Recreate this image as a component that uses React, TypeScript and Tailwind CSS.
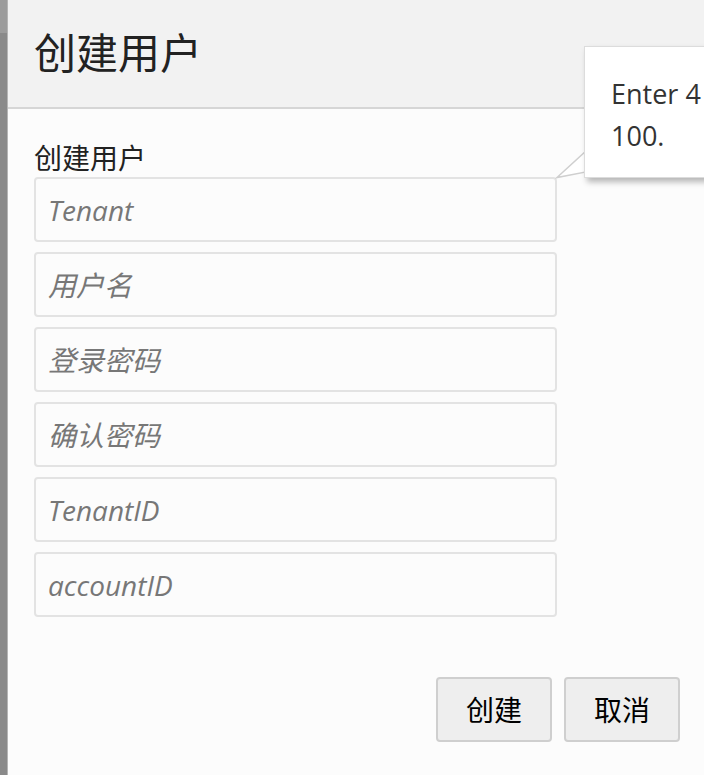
import React from 'react';

const fields = ['Tenant', '用户名', '登录密码', '确认密码', 'TenantID', 'accountID'];

const font = { fontFamily: '"Open Sans", "Noto Sans CJK SC", sans-serif' };

const App: React.FC = () => {
  return (
    <div className="relative flex h-[775px] w-[704px] overflow-hidden bg-[#8a8a8a]" style={font}>
      {/* strip of the page behind the dialog */}
      <div className="flex w-[7px] flex-col">
        <div className="h-[33px] bg-[#9c9c9c]" />
        <div className="flex-1 bg-[#8a8a8a]" />
      </div>
      <div className="w-px bg-[#b5b5b5]" />

      <div className="flex flex-1 flex-col bg-[#fcfcfc]">
        <div className="flex h-[109px] items-center border-b-2 border-[#d6d6d6] bg-[#f2f2f2] pl-[26px] pb-[2px]">
          <h1 className="text-[42px] leading-none text-[#222]">创建用户</h1>
        </div>

        <div className="flex flex-1 flex-col pl-[26px] pr-[24px]">
          <div className="mt-[32px] h-[36px] text-[28px] leading-[35px] text-[#222]">创建用户</div>
          <div className="flex w-[523px] flex-col gap-[10px]">
            {fields.map((f) => (
              <input
                key={f}
                placeholder={f}
                className="h-[65px] w-full rounded-[4px] border-2 border-[#e3e3e3] bg-[#fcfcfc] px-[12px] text-[28px] outline-none placeholder:italic placeholder:text-[#777]"
                style={font}
              />
            ))}
          </div>

          <div className="mt-[60px] flex justify-end gap-[12px]">
            <button className="h-[65px] w-[116px] rounded-[4px] border-2 border-[#cfcfcf] bg-[#eeeeee] text-[28px] text-black">创建</button>
            <button className="h-[65px] w-[116px] rounded-[4px] border-2 border-[#cfcfcf] bg-[#eeeeee] text-[28px] text-black">取消</button>
          </div>
        </div>
      </div>

      {/* validation tooltip */}
      <svg className="absolute left-[555px] top-[148px]" width="34" height="32" viewBox="0 0 34 32">
        <polygon points="2,29.5 31,3 31,24" fill="#ffffff" stroke="#cfcfcf" strokeWidth="1.5" />
      </svg>
      <div className="absolute left-[584px] top-[46px] h-[132px] w-[220px] border border-[#dcdcdc] bg-white pl-[26px] pt-[26px] text-[27px] leading-[42px] text-[#333] shadow-[3px_4px_6px_rgba(0,0,0,0.28)]">
        <div className="whitespace-nowrap">Enter 4</div>
        <div className="whitespace-nowrap">100.</div>
      </div>
    </div>
  );
};

export default App;
